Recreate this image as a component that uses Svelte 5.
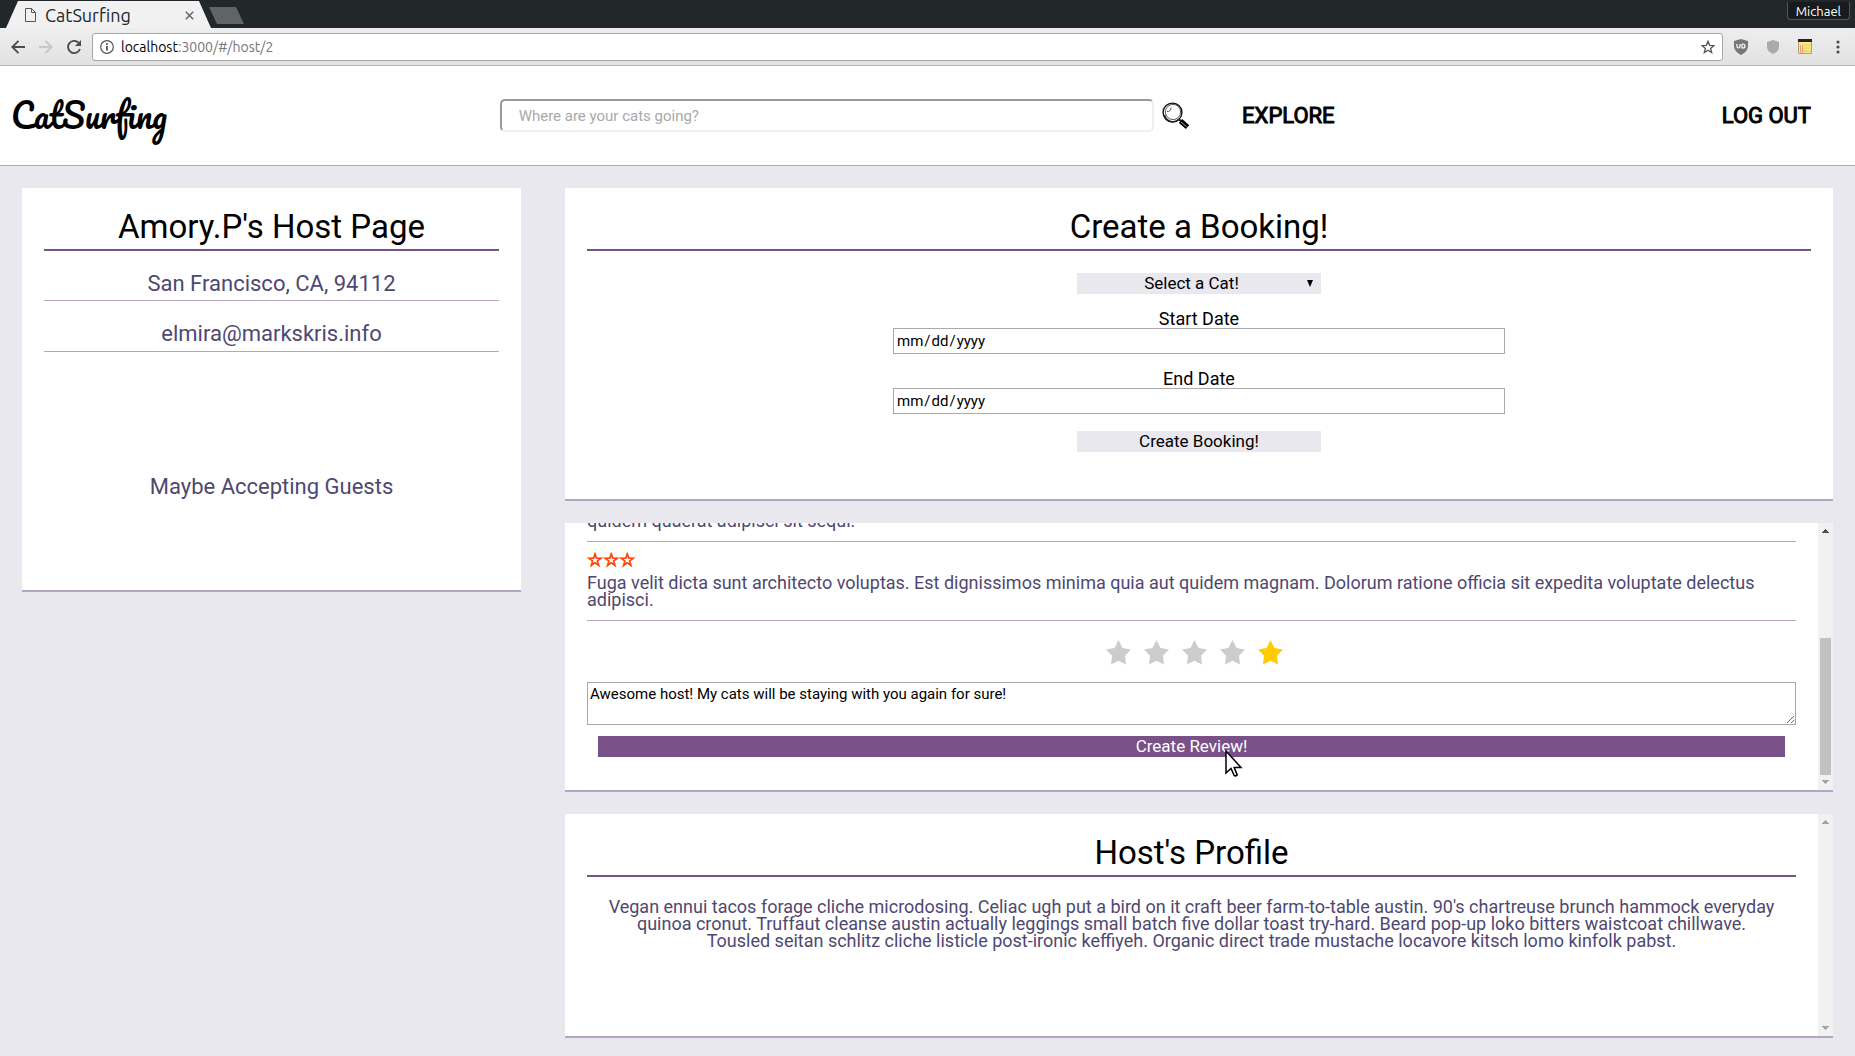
<script>
  let rating = $state('1');
  let review = $state('Awesome host! My cats will be staying with you again for sure!');
  const stars = ['5', '4', '3', '2', '1'];
</script>

{#snippet scrollbar(active)}
  <div class="scrollbar" class:active aria-hidden="true">
    <svg width="15" height="15" viewBox="0 0 15 15" shape-rendering="crispEdges"><path d="M4 10h7v-1h-1V8H9V7H8V6H7v1H6v1H5v1H4z" /></svg>
    <div class="track">{#if active}<div class="thumb"></div>{/if}</div>
    <svg class="down" width="15" height="15" viewBox="0 0 15 15" shape-rendering="crispEdges"><path d="M4 5h7v1h-1v1H9v1H8v1H7V8H6V7H5V6H4z" /></svg>
  </div>
{/snippet}

<div class="window">
  <div class="tabstrip">
    <div class="tab">
      <svg width="11" height="14" viewBox="0 0 11 14" fill="none" stroke="#555"><path d="M.5.5h6l4 4v9H.5z M6.500 .5v4h4" /></svg>
      <span>CatSurfing</span>
      <button class="plain" aria-label="Close tab"><svg width="9" height="9" viewBox="0 0 9 9" stroke="#666" stroke-width="1.500"><path d="M.8.8l7.400 7.400M8.200.8L.8 8.200" /></svg></button>
    </div>
    <button class="newtab" aria-label="New tab"></button>
    <button class="profile-name">Michael</button>
  </div>

  <div class="toolbar">
    <button class="plain" aria-label="Back"><svg width="14" height="14" viewBox="0 0 14 14" fill="none" stroke="#4d4d4d" stroke-width="1.900"><path d="M14 7H1.500M7.500 .8L1.300 7l6.200 6.200" /></svg></button>
    <button class="plain" aria-label="Forward"><svg width="14" height="14" viewBox="0 0 14 14" fill="none" stroke="#c8c8c8" stroke-width="1.900"><path d="M0 7h12.500M6.500 .8L12.700 7l-6.200 6.200" /></svg></button>
    <button class="plain" aria-label="Reload"><svg width="14" height="14" viewBox="0 0 14 14"><path d="M12.900 9A6.100 6.100 0 1 1 11.500 2.700" fill="none" stroke="#4d4d4d" stroke-width="1.900" /><path d="M14 0v6H8z" fill="#4d4d4d" /></svg></button>
    <div class="address">
      <svg width="14" height="14" viewBox="0 0 14 14" fill="none" stroke="#555"><circle cx="7" cy="7" r="6.300" stroke-width="1.200" /><path d="M7 6v4.500M7 3.200v1.700" stroke-width="1.800" /></svg>
      <span class="url"><b>localhost</b>:3000/#/host/2</span>
      <svg width="14" height="14" viewBox="0 0 14 14" fill="none" stroke="#555" stroke-width="1.300"><path d="M7 1.300l1.600 4 4.400.3-3.400 2.800 1.100 4.200L7 10.300l-3.700 2.300 1.100-4.200L1 5.600l4.400-.3z" /></svg>
    </div>
    <div class="extensions">
      <svg width="14" height="16" viewBox="0 0 14 16"><path d="M7 0l7 2v5c0 4-3 7-7 9-4-2-7-5-7-9V2z" fill="#777" /><path d="M3 5v2.500a1.500 1.500 0 0 0 3 0V5M8 5v4h1a2 2 0 0 0 0-4H8" fill="none" stroke="#fff" stroke-width="1.200" /></svg>
      <svg width="14" height="14" viewBox="0 0 14 14"><path d="M7 0l6 2v5c0 3-2 5-6 7-4-2-6-4-6-7V2z" fill="#aaa" /></svg>
      <svg width="14" height="15" viewBox="0 0 14 15"><path d="M.5.5h13v14H.5z" fill="#fbe983" stroke="#aaa17a" /><path d="M0 0h14v3H0z" fill="#222" /><path d="M5 6h8M5 9h8M5 12h8" stroke="#e2cd62" /><path d="M2.500 6v8M4.500 6v8" stroke="#f29a7a" /></svg>
      <button class="plain menu" aria-label="Menu"><svg width="4" height="14" viewBox="0 0 4 14" fill="#4d4d4d"><circle cx="2" cy="2" r="1.600" /><circle cx="2" cy="7" r="1.600" /><circle cx="2" cy="12" r="1.600" /></svg></button>
    </div>
  </div>
</div>

<header>
  <a class="logo" href="#/">CatSurfing</a>
  <form class="search">
    <input type="text" placeholder="Where are your cats going?" aria-label="Where are your cats going?" />
    <button class="plain" type="button" aria-label="Search">
      <svg width="27" height="27" viewBox="0 0 27 27"><circle cx="10.500" cy="10.500" r="9.400" fill="#fff" stroke="#111" stroke-width="1.400" /><circle cx="11" cy="10" r="7.600" fill="none" stroke="#333" stroke-width=".8" /><path d="M2.500 13a8.600 8.600 0 0 0 14.500 4.200" fill="none" stroke="#222" stroke-width="1.600" /><path d="M5 9.500c2 .3 4-.8 4-4" fill="none" stroke="#555" stroke-width="1" /><path d="M16.500 17l3 2.500" stroke="#222" stroke-width="2" /><path d="M18.500 19l7 6" stroke="#000" stroke-width="5" /><path d="M19 20l5.500 4.800" stroke="#ccc" stroke-width=".8" /></svg>
    </button>
  </form>
  <a class="nav" href="#/explore">EXPLORE</a>
  <a class="nav logout" href="#/logout">LOG OUT</a>
</header>

<main>
  <section class="card host">
    <h1>Amory.P's Host Page</h1>
    <p class="row">San Francisco, CA, 94112</p>
    <p class="row">elmira@markskris.info</p>
    <p class="status">Maybe Accepting Guests</p>
  </section>

  <div class="column">
    <section class="card booking">
      <h1>Create a Booking!</h1>
      <form>
        <div class="select">
          <select aria-label="Select a Cat!"><option>Select a Cat!</option></select>
          <svg width="6" height="7" viewBox="0 0 6 7"><path d="M0 0h6L3 7z" /></svg>
        </div>
        <label for="start">Start Date</label>
        <input id="start" type="date" />
        <label for="end">End Date</label>
        <input id="end" type="date" />
        <button type="button">Create Booking!</button>
      </form>
    </section>

    <section class="card scroller reviews">
      <div class="content">
        <article><p>quidem quaerat adipisci sit sequi.</p></article>
        <article>
          <div class="score">☆☆☆</div>
          <p>Fuga velit dicta sunt architecto voluptas. Est dignissimos minima quia aut quidem magnam. Dolorum ratione officia sit expedita voluptate delectus adipisci.</p>
        </article>
        <form>
          <div class="rating" role="radiogroup" aria-label="Rating">
            {#each stars as star}
              <input type="radio" name="rating" value={star} bind:group={rating} aria-label="{star} stars" />
            {/each}
          </div>
          <textarea bind:value={review} aria-label="Review"></textarea>
          <button type="button">
            <span>Create Review!</span>
            <svg class="pointer" width="18" height="28" viewBox="0 0 18 28"><path d="M1 1v22l5-4.500 3.200 7q1.300 1 3-.6l-3-7.400H16z" fill="#fff" stroke="#000" stroke-width="1.500" /></svg>
          </button>
        </form>
      </div>
      {@render scrollbar(true)}
    </section>

    <section class="card scroller profile">
      <div class="content">
        <h1>Host's Profile</h1>
        <p>Vegan ennui tacos forage cliche microdosing. Celiac ugh put a bird on it craft beer farm-to-table austin. 90's chartreuse brunch hammock everyday quinoa cronut. Truffaut cleanse austin actually leggings small batch five dollar toast try-hard. Beard pop-up loko bitters waistcoat chillwave. Tousled seitan schlitz cliche listicle post-ironic keffiyeh. Organic direct trade mustache locavore kitsch lomo kinfolk pabst.</p>
      </div>
      {@render scrollbar(false)}
    </section>
  </div>
</main>

<style>
  :global(body) {
    margin: 0;
    background: #e9e8ee;
    font-family: Roboto, "Liberation Sans", sans-serif;
    font-size: 18px;
    line-height: 17px;
    color: #000;
  }
  :global(*) { box-sizing: border-box; }
  h1, p { margin: 0; font-weight: 400; }
  svg { display: block; flex: none; }
  button, input, select, textarea { font-family: inherit; color: #000; margin: 0; }
  .plain { border: 0; padding: 0; background: none; }

  /* Browser window */
  .window { font-family: Ubuntu, "Noto Sans", sans-serif; }
  .tabstrip {
    display: flex;
    height: 28px;
    padding: 0 2px 0 6px;
    background: #222729;
  }
  .tab {
    display: flex;
    align-items: center;
    gap: 9px;
    width: 205px;
    margin-top: 1px;
    padding: 1px 17px 0 19px;
    background: #f1f1f1;
    clip-path: polygon(12px 0, 193px 0, 100% 100%, 0 100%);
    font-size: 18px;
    color: #20262c;
  }
  .tab span { flex: 1; }
  .newtab {
    width: 35px;
    height: 17px;
    margin: 7px 0 0 -2px;
    border: 0;
    background: #606467;
    clip-path: polygon(0 0, 27px 0, 100% 100%, 8px 100%);
  }
  .profile-name {
    height: 18px;
    margin: 2px 3px 0 auto;
    padding: 0 8px;
    border: 1px solid #555;
    border-top: 0;
    border-radius: 0 0 4px 4px;
    background: #171b1d;
    color: #fff;
    font-family: inherit;
    font-size: 13px;
    line-height: 18px;
  }
  .toolbar {
    display: flex;
    align-items: center;
    gap: 14px;
    height: 38px;
    padding: 0 15px 0 11px;
    border-bottom: 1px solid #b4b4b4;
    background: linear-gradient(#eeeeee, #e2e2e2);
  }
  .address {
    flex: 1;
    display: flex;
    align-items: center;
    gap: 7px;
    height: 28px;
    margin: 0 -3px;
    padding: 0 7px;
    border: 1px solid #a6a6a6;
    border-radius: 3px;
    background: #fff;
    font-size: 14px;
    color: #777;
  }
  .url { flex: 1; padding-top: 1px; }
  .url b { font-weight: 400; color: #000; }
  .extensions { display: flex; align-items: center; gap: 18px; }
  .menu { margin-left: 6px; }

  /* Site header */
  header {
    display: grid;
    grid-template-columns: minmax(0, 489fr) minmax(0, 743fr) minmax(0, 480fr) auto;
    align-items: center;
    height: 100px;
    padding: 0 44px 0 11px;
    border-bottom: 1px solid #b5a5c0;
    background: #fff;
  }
  a { color: #000; text-decoration: none; }
  .logo { padding-bottom: 2px; font: 400 33px/40px Pacifico, Lato, sans-serif; }
  .search { display: flex; align-items: center; gap: 8px; padding-right: 53px; }
  .search input {
    flex: 1;
    min-width: 0;
    height: 33px;
    padding: 0 17px;
    border: 2px solid;
    border-color: #999 #eee #eee #999;
    border-radius: 5px;
    background: #fff;
    font-size: 15px;
  }
  .search input::placeholder { color: #a9a9a9; }
  .nav { font-size: 22px; line-height: 28px; -webkit-text-stroke: 1px #000; }

  /* Cards */
  main {
    display: grid;
    grid-template-columns: minmax(0, 499fr) minmax(0, 1268fr);
    gap: 44px;
    align-items: start;
    padding: 22px 22px 18px;
  }
  .column { display: flex; flex-direction: column; gap: 22px; }
  .card { border-bottom: 2px solid #b5a5c0; background: #fff; text-align: center; }
  h1 {
    padding-bottom: 6px;
    border-bottom: 2px solid #7a5089;
    font-size: 33px;
    line-height: 33px;
  }
  p { color: #4e4871; }

  .host { padding: 22px 22px 92px; }
  .host p { font-size: 22px; line-height: 23px; }
  .row { padding: 21px 0 5px; border-bottom: 1px solid #b5a5c0; }
  .row + .row { padding-bottom: 6px; }
  .status { margin-top: 123px; }

  .booking { padding: 22px 22px 47px; }
  .booking form { display: flex; flex-direction: column; align-items: center; padding-top: 22px; }
  .select { display: grid; width: 20%; }
  .select select, .select svg { grid-area: 1 / 1; }
  .select svg { justify-self: end; align-self: center; margin-right: 8px; pointer-events: none; }
  .select select, .booking button {
    height: 21px;
    border: 0;
    border-radius: 0;
    background: #e9e8ee;
    font-size: 17px;
    line-height: 21px;
  }
  .select select { appearance: none; padding: 0 15px 0 0; text-align: center; text-align-last: center; }
  .booking button { width: 20%; margin-top: 17px; padding: 0; }
  .booking label { padding: 16px 0 1px; }
  .booking input {
    width: 50%;
    height: 26px;
    padding: 0 2px;
    border: 1px solid #a9a9a9;
    background: #fff;
    font-size: 15px;
  }
  .booking input::-webkit-calendar-picker-indicator { display: none; }

  .scroller { display: flex; overflow: hidden; }
  .content { flex: 1; min-width: 0; padding: 22px; }
  .reviews { height: 269px; }
  .reviews .content {
    display: flex;
    flex-direction: column;
    justify-content: flex-end;
    padding: 0 22px 33px;
  }
  article { flex: none; padding-bottom: 12px; border-bottom: 1px solid #b5a5c0; text-align: left; }
  .score {
    padding: 10px 0 6px;
    color: #ff4500;
    font: 400 18px/16px "DejaVu Sans", sans-serif;
    -webkit-text-stroke: 1px #ff4500;
  }
  .reviews form { display: flex; flex-direction: column; }
  .rating { display: flex; justify-content: center; gap: 13px; padding: 19px 0 17px 6px; }
  .rating input {
    appearance: none;
    width: 25px;
    height: 25px;
    background: #ccc;
    clip-path: polygon(50% 0, 66% 32%, 100% 38%, 76% 63%, 80% 98%, 50% 83%, 20% 98%, 24% 63%, 0 38%, 34% 32%);
  }
  .rating input:checked { background: #fc0; }
  textarea {
    height: 43px;
    padding: 2px;
    border: 1px solid #a9a9a9;
    font-size: 15px;
    line-height: 18px;
  }
  .reviews button {
    position: relative;
    height: 21px;
    margin: 11px 11px 0;
    padding: 0;
    border: 0;
    background: #7a5089;
    color: #fff;
    font-size: 17px;
    line-height: 21px;
  }
  .pointer { position: absolute; left: calc(50% + 33px); top: 14px; }

  .profile { height: 224px; }
  .profile p { padding: 21px; }

  .scrollbar {
    display: flex;
    flex-direction: column;
    width: 15px;
    background: #f1f1f1;
    fill: #a3a3a3;
  }
  .active svg:first-child { fill: #505050; }
  .track { flex: 1; display: flex; flex-direction: column; justify-content: flex-end; padding: 0 2px; }
  .thumb { height: 58%; background: #c1c1c1; }
</style>
